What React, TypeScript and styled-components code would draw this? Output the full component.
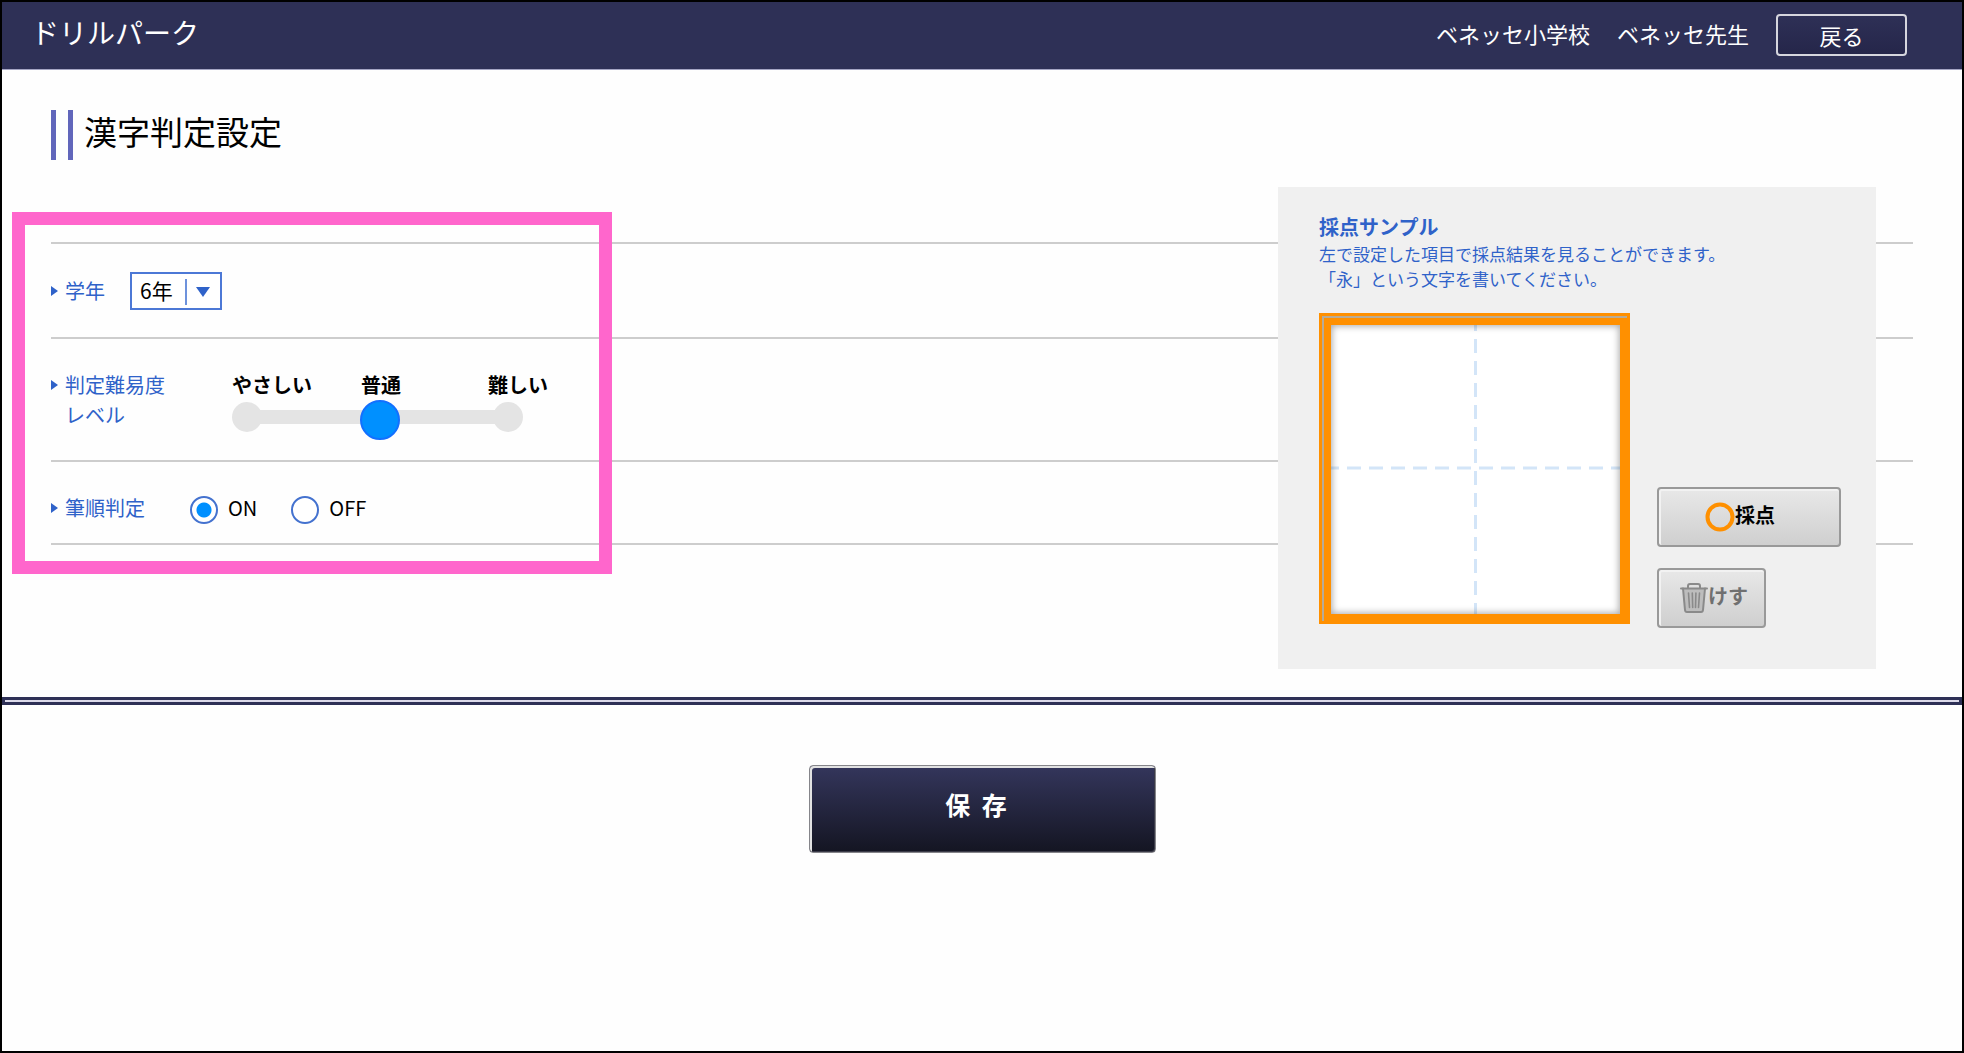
import React, { useState } from "react";
import styled, { createGlobalStyle } from "styled-components";

const navy = "#2e3056";
const blue = "#2f62c9";
const orange = "#ff9000";

const GlobalStyle = createGlobalStyle`
  *, *::before, *::after { box-sizing: border-box; }
  body {
    margin: 0;
    color: #000;
    background: #fefefe;
    font-family: "Noto Sans CJK JP", "Noto Sans", sans-serif;
    font-size: 20px;
    line-height: 30px;
  }
  button, input, select { font: inherit; margin: 0; }
  h1, h2, p { margin: 0; }
`;

const Page = styled.div`
  min-height: 100vh;
  border: 2px solid #000;
`;

const Header = styled.header`
  display: flex;
  align-items: center;
  gap: 27px;
  padding: 12px 55px 13px 29px;
  color: #fff;
  background: ${navy};
  border-bottom: 1px solid #a5a5c4;
`;

const Brand = styled.div`
  margin-right: auto;
  padding-bottom: 6px;
  font-size: 28px;
`;

const Account = styled.span`
  padding-bottom: 4px;
  font-size: 22px;
`;

const BackButton = styled.button`
  width: 131px;
  padding: 4px 0;
  color: #fff;
  font-size: 22px;
  background: linear-gradient(#2e3056, #25264a);
  border: 2px solid #d6d6de;
  border-radius: 4px;
`;

const Main = styled.main`
  padding: 40px 49px 28px;
`;

const Title = styled.h1`
  display: flex;
  align-items: center;
  height: 50px;
  padding: 0 0 8px 12px;
  border-left: 5px solid #6166bb;
  font-size: 33px;
  font-weight: 400;
  line-height: 42px;
`;

const TitleBar = styled.span`
  align-self: flex-start;
  width: 5px;
  height: 50px;
  margin-right: 11px;
  background: #6166bb;
`;

/* The settings list and the sample panel share one cell; the panel lies on top. */
const Stage = styled.div`
  display: grid;
  align-items: start;
  margin-top: 27px;
  > * { grid-area: 1 / 1; }
`;

const Settings = styled.form`
  position: relative;
  margin-top: 55px;
  border-bottom: 2px solid #cdcdcd;
`;

const Highlight = styled.div`
  position: absolute;
  inset: -30px auto -31px -39px;
  width: 600px;
  border: 13px solid #ff66cc;
  pointer-events: none;
`;

const Row = styled.div<{ $pad: string }>`
  display: flex;
  padding: ${(p) => p.$pad};
  border-top: 2px solid #cdcdcd;
`;

const Label = styled.label<{ $width: number }>`
  display: flex;
  align-items: flex-start;
  gap: 7px;
  width: ${(p) => p.$width}px;
  padding-top: ${(p) => (p.$width < 100 ? 4 : 0)}px;
  color: ${blue};
  &::before {
    content: "";
    margin-top: 10px;
    border-left: 7px solid ${blue};
    border-top: 5px solid transparent;
    border-bottom: 5px solid transparent;
  }
`;

const SelectBox = styled.div`
  position: relative;
  &::before {
    content: "";
    position: absolute;
    top: 7px;
    right: 35px;
    height: 26px;
    border-left: 2px solid #6d92dc;
    pointer-events: none;
  }
  &::after {
    content: "";
    position: absolute;
    top: 15px;
    right: 12px;
    border-top: 10px solid ${blue};
    border-left: 7px solid transparent;
    border-right: 7px solid transparent;
    pointer-events: none;
  }
`;

const Select = styled.select`
  display: block;
  width: 92px;
  height: 38px;
  padding: 0 0 2px 8px;
  appearance: none;
  color: #000;
  font-size: 21px;
  background: #fff;
  border: 2px solid #4c78d6;
  border-radius: 0;
`;

const Levels = styled.div`
  display: grid;
  grid-template-columns: 129px 127px 60px;
  font-weight: 700;
`;

const Track = styled.div`
  position: relative;
  display: flex;
  align-items: center;
  justify-content: space-between;
  width: 291px;
  height: 34px;
  background: linear-gradient(#e4e4e4, #e4e4e4) center / 260px 14px no-repeat;
  &::before, &::after {
    content: "";
    width: 30px;
    height: 30px;
    border-radius: 50%;
    background: #e4e4e4;
  }
`;

const Range = styled.input`
  position: absolute;
  inset: 0 -5px -6px 0;
  appearance: none;
  background: transparent;
  &::-webkit-slider-thumb {
    appearance: none;
    width: 40px;
    height: 40px;
    border: 2px solid #1270ff;
    border-radius: 50%;
    background: #0090ff;
  }
`;

const Radios = styled.div`
  display: flex;
  gap: 34px;
  padding-top: 3px;
`;

const RadioLabel = styled.label`
  display: flex;
  align-items: center;
  gap: 10px;
  height: 28px;
  line-height: 26px;
  span { padding-bottom: 4px; }
`;

const Radio = styled.input`
  width: 28px;
  height: 28px;
  appearance: none;
  border: 2px solid #4472cf;
  border-radius: 50%;
  background: #fff;
  &:checked {
    background: radial-gradient(circle, #0090ff 7px, #fff 8px);
  }
`;

const Panel = styled.section`
  z-index: 1;
  justify-self: end;
  width: 598px;
  margin-right: 37px;
  padding: 28px 35px 41px 41px;
  background: #f0f0f0;
`;

const PanelTitle = styled.h2`
  color: ${blue};
  font-size: 20px;
  line-height: 24px;
`;

const PanelText = styled.p`
  padding-top: 2px;
  color: ${blue};
  font-size: 17px;
  line-height: 25px;
`;

const Practice = styled.div`
  display: flex;
  gap: 27px;
  margin-top: 22px;
`;

const Frame = styled.div`
  flex: none;
  width: 311px;
  height: 311px;
  border: 3px solid ${orange};
`;

const Groove = styled.div`
  height: 100%;
  border: solid #b8ab96;
  border-width: 2px 0 0 2px;
`;

const Paper = styled.div`
  position: relative;
  height: 100%;
  border: 7px solid ${orange};
  background: #fff;
  &::after {
    content: "";
    position: absolute;
    inset: 0;
    box-shadow: inset 0 0 7px 1px rgba(0, 0, 0, 0.35);
  }
  svg { display: block; }
`;

const Actions = styled.div`
  display: flex;
  flex-direction: column;
  align-items: flex-start;
  gap: 21px;
  padding-top: 174px;
`;

const ActionButton = styled.button<{ $wide?: boolean }>`
  display: flex;
  align-items: center;
  width: ${(p) => (p.$wide ? 184 : 109)}px;
  height: 60px;
  padding: 0 0 0 ${(p) => (p.$wide ? 46 : 21)}px;
  color: ${(p) => (p.$wide ? "#000" : "#707070")};
  font-weight: 700;
  background: linear-gradient(#e8e8e8, #cfcfcf);
  border: 2px solid #999;
  border-radius: 4px;
  box-shadow: inset 1px 1px 0 1px #f2f2f2;
  svg { flex: none; }
  span { padding-bottom: 5px; }
`;

const Divider = styled.hr`
  height: 8px;
  margin: 0;
  background: #dcdaea;
  border: 3px solid ${navy};
`;

const Footer = styled.footer`
  display: flex;
  justify-content: center;
  padding: 60px 0;
`;

const SaveButton = styled.button`
  width: 347px;
  height: 88px;
  padding: 0 12px 10px 0;
  color: #fff;
  font-size: 25px;
  font-weight: 700;
  white-space: pre;
  background: linear-gradient(#34365c, #141522);
  border: 1px solid #85858a;
  border-radius: 4px;
  box-shadow: inset 2px 2px 0 #e2e2e2, inset -1px -1px 0 #3a3a48;
`;

function Guides() {
  return (
    <svg width="100%" height="100%" viewBox="0 0 289 289" stroke="#d3e5f8" strokeWidth="3" strokeDasharray="14 8" aria-hidden="true">
      <path d="M144.500 -8V289" />
      <path d="M-6 143H289" />
    </svg>
  );
}

function Ring() {
  return (
    <svg width="30" height="30" viewBox="0 0 30 30" fill="none" aria-hidden="true">
      <circle cx="15" cy="15" r="12.500" stroke={orange} strokeWidth="4" />
    </svg>
  );
}

function Trash() {
  return (
    <svg width="28" height="30" viewBox="0 0 28 30" fill="none" stroke="#8a8a8a" strokeWidth="2" strokeLinecap="round" strokeLinejoin="round" aria-hidden="true">
      <path d="M3 5.500 5 27q.2 2 2 2h14q1.800 0 2-2L25 5.500" fill="#bdbdbd" />
      <path d="M1 5.500h26" />
      <path d="M8 5V3q0-2 2-2h8q2 0 2 2v2" />
      <path d="M8.500 10l1 14.500M12.300 10l.4 14.500M15.900 10l-.4 14.500M19.500 10l-1 14.500" strokeWidth="1.600" />
    </svg>
  );
}

export default function App() {
  const [grade, setGrade] = useState("6");
  const [level, setLevel] = useState(1);
  const [order, setOrder] = useState("ON");

  return (
    <>
      <GlobalStyle />
      <Page>
        <Header>
          <Brand>ドリルパーク</Brand>
          <Account>ベネッセ小学校</Account>
          <Account>ベネッセ先生</Account>
          <BackButton type="button">戻る</BackButton>
        </Header>

        <Main>
          <Title><TitleBar />漢字判定設定</Title>

          <Stage>
            <Settings>
              <Row $pad="28px 0 27px">
                <Label htmlFor="grade" $width={79}>学年</Label>
                <SelectBox>
                  <Select id="grade" value={grade} onChange={(e) => setGrade(e.target.value)}>
                    {["1", "2", "3", "4", "5", "6"].map((g) => (
                      <option key={g} value={g}>{g}年</option>
                    ))}
                  </Select>
                </SelectBox>
              </Row>

              <Row $pad="31px 0 26px">
                <Label htmlFor="level" $width={181}>
                  <span>判定難易度<br />レベル</span>
                </Label>
                <div>
                  <Levels>
                    <span>やさしい</span>
                    <span>普通</span>
                    <span>難しい</span>
                  </Levels>
                  <Track>
                    <Range id="level" type="range" min={0} max={2} value={level} onChange={(e) => setLevel(Number(e.target.value))} />
                  </Track>
                </div>
              </Row>

              <Row $pad="31px 0 19px" role="radiogroup" aria-labelledby="order">
                <Label as="span" id="order" $width={139}>筆順判定</Label>
                <Radios>
                  {["ON", "OFF"].map((v) => (
                    <RadioLabel key={v}>
                      <Radio type="radio" name="order" value={v} checked={order === v} onChange={() => setOrder(v)} />
                      <span>{v}</span>
                    </RadioLabel>
                  ))}
                </Radios>
              </Row>
              <Highlight />
            </Settings>

            <Panel>
              <PanelTitle>採点サンプル</PanelTitle>
              <PanelText>
                左で設定した項目で採点結果を見ることができます。<br />
                「永」という文字を書いてください。
              </PanelText>
              <Practice>
                <Frame><Groove><Paper><Guides /></Paper></Groove></Frame>
                <Actions>
                  <ActionButton type="button" $wide><Ring /><span>採点</span></ActionButton>
                  <ActionButton type="button"><Trash /><span>けす</span></ActionButton>
                </Actions>
              </Practice>
            </Panel>
          </Stage>
        </Main>

        <Divider />
        <Footer>
          <SaveButton type="button">{"保  存"}</SaveButton>
        </Footer>
      </Page>
    </>
  );
}
